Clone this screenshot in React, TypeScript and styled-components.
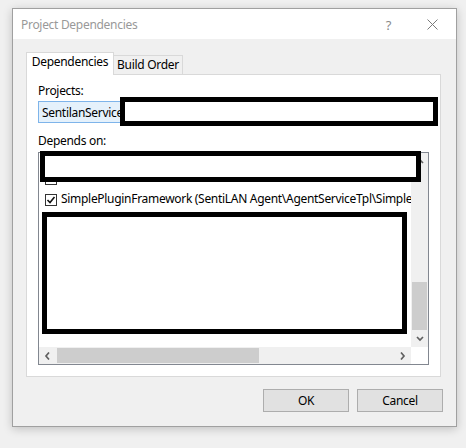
import React from "react";
import styled, { createGlobalStyle } from "styled-components";

const GlobalStyle = createGlobalStyle`
  html, body { margin: 0; padding: 0; background: #f0f0f0; }
  body {
    font-family: "Noto Sans", "Segoe UI", sans-serif;
    font-size: 12px;
    letter-spacing: -0.3px;
    color: #000;
  }
  * { box-sizing: border-box; }
`;

const Stage = styled.div`
  width: 466px;
  height: 448px;
  padding: 8px 0 0 12px;
`;

const Window = styled.div`
  width: 445px;
  height: 419px;
  border: 1px solid #a0a0a0;
  background: #f0f0f0;
  display: flex;
  flex-direction: column;
  box-shadow: 0 2px 9px rgba(0, 0, 0, 0.2);
`;

const TitleBar = styled.div`
  height: 30px;
  background: #fff;
  display: flex;
  align-items: center;
  padding: 1px 18px 0 8px;
`;

const Title = styled.div`
  flex: 1;
  color: #999;
  line-height: 16px;
`;

const HelpGlyph = styled.span`
  color: #8a8a8a;
  font-size: 13px;
  line-height: 16px;
  margin-right: 36px;
`;

const CloseIcon = () => (
  <svg width="11" height="11" viewBox="0 0 11 11">
    <path d="M0.5 0.5 L10.5 10.5 M10.5 0.5 L0.5 10.5" stroke="#7a7a7a" strokeWidth="1" fill="none" />
  </svg>
);

const Body = styled.div`
  flex: 1;
  display: flex;
  flex-direction: column;
  padding: 13px 13px 14px 13px;
`;

const TabStrip = styled.div`
  display: flex;
  align-items: flex-end;
  height: 23px;
  position: relative;
  z-index: 1;
`;

const Tab = styled.div<{ $active?: boolean }>`
  border: 1px solid #d9d9d9;
  border-bottom: ${(p) => (p.$active ? "none" : "1px solid #d9d9d9")};
  background: ${(p) => (p.$active ? "#fff" : "#f0f0f0")};
  height: ${(p) => (p.$active ? "23px" : "20px")};
  width: ${(p) => (p.$active ? "88px" : "70px")};
  margin-left: ${(p) => (p.$active ? "0" : "-1px")};
  position: relative;
  z-index: ${(p) => (p.$active ? 2 : 1)};
  display: flex;
  justify-content: center;
  line-height: 16px;
  padding-top: 1px;
  white-space: nowrap;
`;

const Panel = styled.div`
  width: 415px;
  height: 303px;
  margin-top: -1px;
  border: 1px solid #d9d9d9;
  background: #fff;
  padding: 6px 11px 11px 11px;
  display: flex;
  flex-direction: column;
`;

const Label = styled.div<{ $gap: number }>`
  line-height: 16px;
  padding-top: 2px;
  margin-bottom: ${(p) => p.$gap}px;
`;

const ComboWrap = styled.div`
  position: relative;
  margin-bottom: 8px;
`;

const Combo = styled.div`
  width: 391px;
  height: 22px;
  border: 1px solid #7eb4ea;
  background: #e5f1fb;
  display: flex;
  align-items: center;
  padding: 1px 0 0 3px;
  line-height: 16px;
`;

const Redaction = styled.div`
  position: absolute;
  border: 5px solid #000;
  background: #fff;
  z-index: 5;
`;

const ListBox = styled.div`
  position: relative;
  width: 391px;
  height: 213px;
  border: 1px solid #828790;
  display: grid;
  grid-template-columns: 1fr 17px;
  grid-template-rows: 1fr 17px;
  background: #fff;
`;

const ListContent = styled.div`
  overflow: hidden;
  padding-left: 6px;
`;

const Rows = styled.div`
  margin-top: -5px;
`;

const Row = styled.div`
  height: 21px;
  display: flex;
  align-items: flex-start;
  white-space: nowrap;
`;

const CheckBox = styled.div`
  width: 12px;
  height: 12px;
  margin-top: 4px;
  border: 1px solid #333;
  background: #fff;
  flex: none;
  display: flex;
  align-items: center;
  justify-content: center;
`;

const RowText = styled.span`
  margin-left: 4px;
  padding-top: 1px;
  line-height: 16px;
`;

const VScroll = styled.div`
  background: #f0f0f0;
  display: flex;
  flex-direction: column;
`;

const HScroll = styled.div`
  background: #f0f0f0;
  display: flex;
`;

const ArrowBtn = styled.div`
  width: 17px;
  height: 17px;
  flex: none;
  display: flex;
  align-items: center;
  justify-content: center;
`;

const VTrack = styled.div`
  flex: 1;
  display: flex;
  flex-direction: column;
  justify-content: flex-end;
  padding: 0 1px;
`;

const HTrack = styled.div`
  flex: 1;
  display: flex;
  padding: 1px 0 1px 1px;
`;

const Thumb = styled.div`
  background: #cdcdcd;
`;

const Corner = styled.div`
  background: #fff;
`;

const ButtonRow = styled.div`
  display: flex;
  justify-content: flex-end;
  gap: 8px;
  margin-top: 12px;
`;

const Button = styled.button`
  width: 86px;
  height: 23px;
  background: #e1e1e1;
  border: 1px solid #adadad;
  font-family: inherit;
  font-size: 12px;
  letter-spacing: inherit;
  color: #000;
  padding: 0;
  line-height: 16px;
`;

const Chevron = ({ dir }: { dir: "up" | "down" | "left" | "right" }) => {
  const d = {
    up: "M1 5 L4 2 L7 5",
    down: "M1 2 L4 5 L7 2",
    left: "M5 0.5 L2 4 L5 7.5",
    right: "M2 0.5 L5 4 L2 7.5",
  }[dir];
  const vertical = dir === "up" || dir === "down";
  return (
    <svg width={vertical ? 8 : 7} height={vertical ? 7 : 8} viewBox={vertical ? "0 0 8 7" : "0 0 7 8"}>
      <path d={d} stroke="#606060" strokeWidth="1.7" fill="none" />
    </svg>
  );
};

const Check = () => (
  <svg width="10" height="10" viewBox="0 0 10 10">
    <path d="M1.5 5 L4 7.5 L8.5 2" stroke="#111" strokeWidth="1.6" fill="none" />
  </svg>
);

export default function App() {
  return (
    <Stage>
      <GlobalStyle />
      <Window>
        <TitleBar>
          <Title>Project Dependencies</Title>
          <HelpGlyph>?</HelpGlyph>
          <CloseIcon />
        </TitleBar>
        <Body>
          <TabStrip>
            <Tab $active>Dependencies</Tab>
            <Tab>Build Order</Tab>
          </TabStrip>
          <Panel>
            <Label $gap={2}>Projects:</Label>
            <ComboWrap>
              <Combo>SentilanService</Combo>
              <Redaction style={{ left: 82, top: -4, width: 318, height: 29 }} />
            </ComboWrap>
            <Label $gap={3}>Depends on:</Label>
            <ListBox>
              <ListContent>
                <Rows>
                  <Row>
                    <CheckBox />
                  </Row>
                  <Row>
                    <CheckBox />
                  </Row>
                  <Row>
                    <CheckBox>
                      <Check />
                    </CheckBox>
                    <RowText>
                      SimplePluginFramework (SentiLAN Agent\AgentServiceTpl\SimplePluginFramework\SimplePluginFramework.csproj)
                    </RowText>
                  </Row>
                </Rows>
              </ListContent>
              <VScroll>
                <ArrowBtn>
                  <Chevron dir="up" />
                </ArrowBtn>
                <VTrack>
                  <Thumb style={{ height: 48 }} />
                </VTrack>
                <ArrowBtn>
                  <Chevron dir="down" />
                </ArrowBtn>
              </VScroll>
              <HScroll>
                <ArrowBtn>
                  <Chevron dir="left" />
                </ArrowBtn>
                <HTrack>
                  <Thumb style={{ width: 202 }} />
                </HTrack>
                <ArrowBtn>
                  <Chevron dir="right" />
                </ArrowBtn>
              </HScroll>
              <Corner />
              <Redaction style={{ left: 1, top: -2, width: 381, height: 31 }} />
              <Redaction style={{ left: 3, top: 59, width: 365, height: 122 }} />
            </ListBox>
          </Panel>
          <ButtonRow>
            <Button>OK</Button>
            <Button>Cancel</Button>
          </ButtonRow>
        </Body>
      </Window>
    </Stage>
  );
}
